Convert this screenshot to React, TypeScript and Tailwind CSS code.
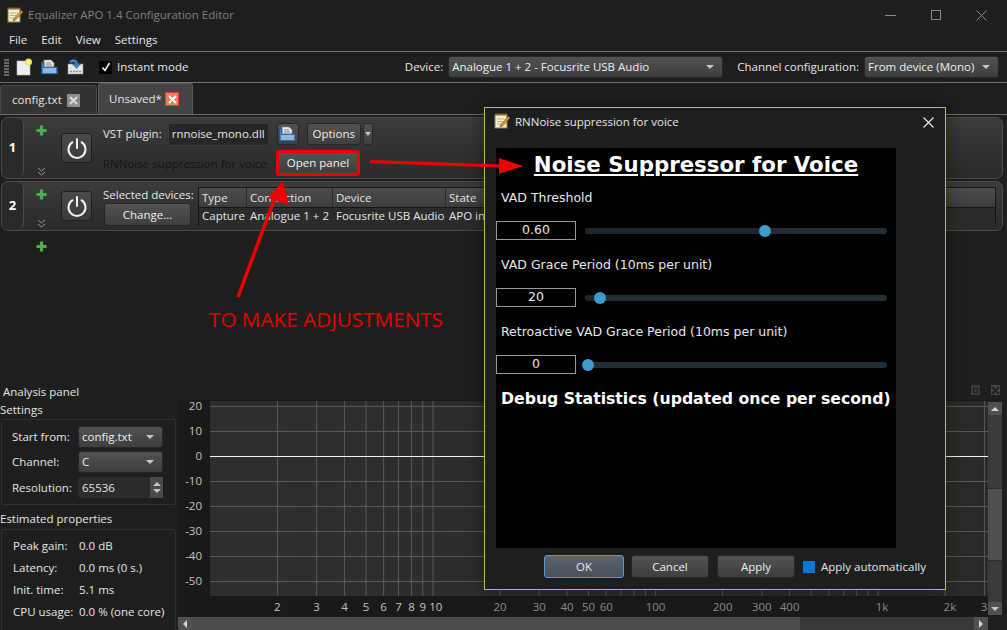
import type { ReactNode } from "react";

const uiFont = "font-['Open_Sans',sans-serif]";
const btn =
  "flex items-center justify-center rounded-[3px] border border-[#262626] bg-linear-to-b from-[#525252] to-[#3e3e3e] text-[#f0f0f0]";

function NotepadIcon() {
  return (
    <svg width="16" height="16" viewBox="0 0 16 16">
      <rect x="1" y="2" width="12" height="13" fill="#f5eecb" stroke="#8a7a50" strokeWidth="1" />
      <path d="M1.5 1.5h11" stroke="#b58a3a" strokeWidth="2" strokeDasharray="1 1" />
      <path d="M3 6h8M3 8.5h6M3 11h5" stroke="#b9b08a" strokeWidth="1" />
      <path d="M14.5 3.5L7.5 11l-1.5 3 3-1.5 7-7.5z" fill="#e69a2e" stroke="#7a4a12" strokeWidth="0.7" />
    </svg>
  );
}

function NewIcon() {
  return (
    <svg width="16" height="18" viewBox="0 0 16 18">
      <rect x="1" y="3" width="13" height="14" fill="#efefef" stroke="#bdbdbd" strokeWidth="0.6" />
      <circle cx="12.5" cy="4" r="3.5" fill="#f6e04a" />
      <circle cx="12.5" cy="4" r="1.8" fill="#fff9b0" />
    </svg>
  );
}

function OpenIcon() {
  return (
    <svg width="17" height="16" viewBox="0 0 17 16">
      <path d="M3 1h7l3 3v5H3z" fill="#e9e9e9" stroke="#9a9a9a" strokeWidth="0.6" />
      <path d="M5 4h5M5 6h6" stroke="#8a8a8a" strokeWidth="1" />
      <path d="M0.5 3v12h16V8H3V3z" fill="#3f7fbf" stroke="#1d4f86" strokeWidth="0.7" />
      <rect x="2" y="9" width="13" height="5" fill="#8db9e4" />
    </svg>
  );
}

function SaveIcon() {
  return (
    <svg width="17" height="16" viewBox="0 0 17 16">
      <rect x="1" y="5" width="15" height="10" fill="#e6e6e6" stroke="#8f8f8f" strokeWidth="0.6" />
      <path d="M3 12.500h2M6 12.500h2M9 12.500h2M12 12.500h2" stroke="#8a8a8a" strokeWidth="1.500" />
      <path d="M3 3c3-2.500 6.500-1.500 6.500 2" fill="none" stroke="#3c86c6" strokeWidth="2.600" />
      <path d="M5.500 5h8l-4 4.500z" fill="#3c86c6" stroke="#1b4f80" strokeWidth="0.5" />
    </svg>
  );
}

function Caret({ className = "" }: { className?: string }) {
  return <span className={`h-0 w-0 border-x-[4px] border-t-[4px] border-x-transparent border-t-[#c8c8c8] ${className}`} />;
}

function Plus() {
  return (
    <svg width="11" height="11" viewBox="0 0 11 11">
      <path d="M5.500 0.500v10M0.500 5.500h10" stroke="#4cae4c" strokeWidth="3.2" />
    </svg>
  );
}

function Chevrons() {
  return (
    <svg width="9" height="9" viewBox="0 0 9 9" fill="none" stroke="#9a9a9a" strokeWidth="1">
      <path d="M1 1l3.500 3L8 1M1 5l3.500 3L8 5" />
    </svg>
  );
}

function CloseGlyph({ color }: { color: string }) {
  return (
    <svg width="9" height="9" viewBox="0 0 9 9" stroke={color} strokeWidth="2">
      <path d="M1 1l7 7M8 1l-7 7" />
    </svg>
  );
}

function PowerButton() {
  return (
    <div className="flex h-[30px] w-[31px] items-center justify-center rounded-[3px] border border-[#1e1e1e] bg-linear-to-b from-[#4a4a4a] to-[#3a3a3a]">
      <svg width="22" height="22" viewBox="0 0 22 22" fill="none" stroke="#f2f2f2" strokeWidth="2" strokeLinecap="round">
        <path d="M11 2v9" />
        <path d="M6.500 5.200a8.500 8.500 0 1 0 9 0" />
      </svg>
    </div>
  );
}

function Row({ num, height, children }: { num: number; height: string; children: ReactNode }) {
  return (
    <div className={`flex ${height} rounded-[7px] border border-[#4b4b4b] bg-linear-to-b from-[#3b3b3b] to-[#2a2a2a]`}>
      <div className="flex w-[22px] items-center justify-center rounded-[7px] border-r border-[#4b4b4b] bg-[#2a2a2a] text-[13px] font-bold text-white">
        {num}
      </div>
      <div className="flex w-[37px] flex-col items-center justify-between pt-[7px] pr-[3px] pb-[2px]">
        <Plus />
        <Chevrons />
      </div>
      <div className="flex w-[42px] items-center">
        <PowerButton />
      </div>
      <div className="min-w-0 flex-1">{children}</div>
    </div>
  );
}

function Combo({ text, className }: { text: string; className: string }) {
  return (
    <div className={`${btn} justify-between! pr-[8px] pl-[3px] ${className}`}>
      <span>{text}</span>
      <Caret />
    </div>
  );
}

function Stat({ label, value }: { label: string; value: string }) {
  return (
    <div className="flex h-[22px] items-center">
      <span className="w-[66px]">{label}</span>
      <span>{value}</span>
    </div>
  );
}

function ParamRow({ label, value, thumb, track, top }: { label: string; value: string; thumb: string; track: string; top: string }) {
  return (
    <>
      <div className={`${top} h-[16px] pl-[5px] leading-[16px]`}>{label}</div>
      <div className="mt-[15px] flex h-[19px] items-center">
        <div className="flex h-[19px] w-[80px] items-center justify-center border border-[#9a9a9a]">{value}</div>
        <div className="relative ml-[9px] h-[6px] w-[302px] rounded-full bg-[#232f36]">
          <div className={`absolute top-[-3px] h-[12px] w-[12px] rounded-full bg-[#3d9ccb] ${thumb}`} />
          <div className={`h-[6px] rounded-l-full bg-[#1b262b] ${track}`} />
        </div>
      </div>
    </>
  );
}

const FREQS = [2, 3, 4, 5, 6, 7, 8, 9, 10, 20, 30, 40, 50, 60, 70, 80, 90, 100, 200, 300, 400, 500, 600, 700, 800, 900, 1000, 2000, 3000];
const fx = (f: number) => 433 + 222.6 * Math.log10(f / 10);
const DB = [20, 10, 0, -10, -20, -30, -40, -50];
const XLABELS: [string, number, string][] = [
  ["2", 2, "#c4c4c4"], ["3", 3, "#c4c4c4"], ["4", 4, "#c4c4c4"], ["5", 5, "#c4c4c4"], ["6", 6, "#c4c4c4"],
  ["7", 7, "#c4c4c4"], ["8", 8, "#c4c4c4"], ["9", 9, "#c4c4c4"], ["10", 10.3, "#c4c4c4"],
  ["20", 20, "#8a8f96"], ["30", 30, "#8a8f96"], ["40", 40, "#8a8f96"], ["50", 50, "#8a8f96"], ["60", 60, "#8a8f96"],
  ["100", 100, "#8a8f96"], ["200", 200, "#8a8f96"], ["300", 300, "#8a8f96"], ["400", 400, "#8a8f96"],
  ["1k", 1040, "#8a8f96"], ["2k", 2100, "#8a8f96"], ["3", 2990, "#8a8f96"],
];

function Chart() {
  return (
    <svg width="810" height="217" viewBox="178 400 810 217" className="block shrink-0 overflow-visible">
      <defs>
        <linearGradient id="plot" x1="0" y1="0" x2="1" y2="0">
          <stop offset="0" stopColor="#2e2e2e" />
          <stop offset="1" stopColor="#2a2a2a" />
        </linearGradient>
      </defs>
      <rect x="178" y="400" width="810" height="217" fill="#191919" />
      <rect x="210" y="401" width="778" height="195" fill="url(#plot)" />
      {FREQS.map((f) => (
        <line key={f} x1={fx(f)} x2={fx(f)} y1="401" y2="596" stroke="#595959" />
      ))}
      {DB.map((d) => {
        const y = 456.500 - d * 2.5;
        return (
          <g key={d}>
            <line x1="210" x2="988" y1={y} y2={y} stroke={d === 0 ? "#f4f4f4" : "#595959"} />
            <text x="202" y={y + 3} textAnchor="end" fontSize="11.500" fill="#c4c4c4" fontFamily="Open Sans, sans-serif">
              {d}
            </text>
          </g>
        );
      })}
      {XLABELS.map(([t, f, c]) => (
        <text key={t + f} x={fx(f)} y="611" textAnchor="middle" fontSize="11.500" fill={c} fontFamily="Open Sans, sans-serif">
          {t}
        </text>
      ))}
    </svg>
  );
}

function Dialog() {
  return (
    <div className="absolute top-[107px] left-[484px] flex h-[483px] w-[462px] flex-col border border-[#b6bd5e] bg-[#1e1e1e] shadow-[0_0_18px_rgba(0,0,0,0.45)]">
      <div className="flex h-[40px] shrink-0 items-start pt-[5px] pl-[9px]">
        <NotepadIcon />
        <span className="ml-[5px] leading-[17px]">RNNoise suppression for voice</span>
        <svg width="11" height="11" viewBox="0 0 11 11" className="mt-[4px] mr-[11px] ml-auto" stroke="#f0f0f0" strokeWidth="1.1">
          <path d="M0.500 0.500l10 10M10.500 0.500l-10 10" />
        </svg>
      </div>
      <div className="ml-[11px] h-[400px] w-[400px] shrink-0 bg-black font-['DejaVu_Sans',sans-serif] text-[12.500px] text-[#e8e8e8]">
        <div className="pt-[2px] text-center text-[21.300px] leading-[30px] font-bold text-white underline">Noise Suppressor for Voice</div>
        <ParamRow top="mt-[10px]" label="VAD Threshold" value="0.60" thumb="left-[174px]" track="w-[180px]" />
        <ParamRow top="mt-[17px]" label="VAD Grace Period (10ms per unit)" value="20" thumb="left-[9px]" track="w-[15px]" />
        <ParamRow top="mt-[17px]" label="Retroactive VAD Grace Period (10ms per unit)" value="0" thumb="left-[-3px]" track="w-0" />
        <div className="mt-[15px] pl-[5px] text-[15.700px] leading-[20px] font-bold text-white">Debug Statistics (updated once per second)</div>
      </div>
      <div className="mt-[7px] flex h-[23px] items-center">
        <div className="ml-[59px] flex h-[23px] w-[80px] items-center justify-center rounded-[3px] border border-[#4a9ddb] bg-linear-to-b from-[#5c6470] to-[#4a4f57]">OK</div>
        <div className={`${btn} ml-[7px] h-[23px] w-[78px]`}>Cancel</div>
        <div className={`${btn} ml-[8px] h-[23px] w-[78px]`}>Apply</div>
        <span className="ml-[8px] h-[12px] w-[12px] bg-[#0a78d2]" />
        <span className="ml-[6px]">Apply automatically</span>
      </div>
    </div>
  );
}

function Annotations() {
  return (
    <>
      <svg className="absolute top-0 left-0" width="1007" height="630" viewBox="0 0 1007 630" fill="#f00000" stroke="none">
        <path d="M370 161.500L500 166" stroke="#f00000" strokeWidth="3" />
        <path d="M499 158l24 8-24 8z" />
        <path d="M238 297L277 192" stroke="#f00000" strokeWidth="3.500" />
        <path d="M283 181l6 24-21-7z" />
      </svg>
      <div className="absolute top-[306px] left-[209px] text-[20.700px] leading-[26px] text-[#e60000]">TO MAKE ADJUSTMENTS</div>
    </>
  );
}

export default function App() {
  return (
    <div className={`relative flex h-[630px] w-[1007px] flex-col overflow-hidden bg-[#1e1e1e] text-[11.500px] whitespace-nowrap text-[#e6e6e6] ${uiFont}`}>
      {/* title bar */}
      <div className="flex h-[30px] shrink-0 items-center pl-[7px]">
        <NotepadIcon />
        <span className="ml-[5px] text-[#808080]">Equalizer APO 1.4 Configuration Editor</span>
        <div className="mr-[20px] ml-auto flex items-center gap-[35px]">
          <span className="h-px w-[11px] bg-[#8c8c8c]" />
          <span className="h-[10px] w-[10px] border border-[#8c8c8c]" />
          <svg width="11" height="11" viewBox="0 0 11 11" stroke="#8c8c8c" strokeWidth="1">
            <path d="M0.500 0.500l10 10M10.500 0.500l-10 10" />
          </svg>
        </div>
      </div>

      {/* menu */}
      <div className="flex h-[22px] shrink-0 items-center gap-[14px] border-b border-[#6f6f6f] pb-[2px] pl-[9px]">
        <span>File</span>
        <span>Edit</span>
        <span>View</span>
        <span>Settings</span>
      </div>

      {/* toolbar */}
      <div className="flex h-[31px] shrink-0 items-center border-b border-[#6f6f6f] pr-[8px] pl-[4px]">
        <span className="h-[17px] w-[5px] bg-[repeating-linear-gradient(to_bottom,#6a6a6a_0,#6a6a6a_2px,transparent_2px,transparent_3px)]" />
        <div className="ml-[7px] flex w-[78px] items-center gap-[9px]">
          <NewIcon />
          <OpenIcon />
          <SaveIcon />
        </div>
        <span className="ml-[5px] flex h-[13px] w-[13px] items-center justify-center bg-black">
          <svg width="10" height="10" viewBox="0 0 10 10" fill="none" stroke="#fff" strokeWidth="1.500">
            <path d="M1.500 5.500l2.500 3L8.500 1" />
          </svg>
        </span>
        <span className="ml-[5px]">Instant mode</span>
        <span className="ml-auto">Device:</span>
        <Combo text="Analogue 1 + 2 - Focusrite USB Audio" className="ml-[5px] h-[22px] w-[275px]" />
        <span className="ml-[14px]">Channel configuration:</span>
        <Combo text="From device (Mono)" className="ml-[5px] h-[22px] w-[135px]" />
      </div>

      {/* tabs */}
      <div className="flex h-[32px] shrink-0 items-end border-b border-[#6f6f6f]">
        <div className="flex h-[29px] w-[97px] items-center rounded-t-[3px] border border-b-0 border-[#474747] bg-[#333333] pl-[11px]">
          <span>config.txt</span>
          <span className="mr-[16px] ml-auto flex h-[13px] w-[13px] items-center justify-center bg-[#8d8d8d]">
            <CloseGlyph color="#dcdcdc" />
          </span>
        </div>
        <div className="ml-px flex h-[31px] w-[95px] items-center rounded-t-[3px] border border-b-0 border-[#585858] bg-[#444444] pl-[10px]">
          <span>Unsaved*</span>
          <span className="mr-[13px] ml-auto flex h-[14px] w-[14px] items-center justify-center border border-[#e23b2e] bg-[#ea7d62]">
            <CloseGlyph color="#ffffff" />
          </span>
        </div>
      </div>

      {/* filter rows */}
      <div className="flex min-h-0 flex-1 flex-col gap-[2px] pt-[2px] pr-[4px] pl-px">
        <Row num={1} height="h-[62px]">
          <div className="flex h-[28px] items-center pt-[4px]">
            <span>VST plugin:</span>
            <div className="ml-[6px] flex h-[23px] w-[101px] items-center justify-center rounded-[3px] border border-[#3a3a3a] bg-[#262626]">rnnoise_mono.dll</div>
            <div className={`${btn} ml-[8px] h-[22px] w-[22px]`}>
              <OpenIcon />
            </div>
            <div className={`${btn} ml-[8px] h-[22px] w-[54px]`}>Options</div>
            <div className={`${btn} ml-[2px] h-[22px] w-[10px]`}>
              <Caret className="border-x-[3px]!" />
            </div>
          </div>
          <div className="mt-[4px] flex items-center">
            <span className="w-[173px] pt-[1px] text-[#141414]">RNNoise suppression for voice</span>
            <div className={`${btn} h-[26px] w-[84px] border-[3px]! border-[#ee0000]!`}>Open panel</div>
          </div>
        </Row>
        <Row num={2} height="h-[50px]">
          <div className="flex h-full">
            <div className="w-[95px] pt-[4px]">
              <div className="leading-[17px]">Selected devices:</div>
              <div className={`${btn} ml-px h-[23px] w-[87px]`}>Change...</div>
            </div>
            <div className="mt-[5px] h-[39px] w-[798px] border border-[#151515]">
              <div className="grid h-[20px] grid-cols-[48px_86px_113px_1fr] border-b border-[#151515] bg-linear-to-b from-[#4c4c4c] to-[#3c3c3c] leading-[19px]">
                <span className="border-r border-[#2a2a2a] pl-[3px]">Type</span>
                <span className="border-r border-[#2a2a2a] pl-[3px]">Connection</span>
                <span className="border-r border-[#2a2a2a] pl-[3px]">Device</span>
                <span className="pl-[3px]">State</span>
              </div>
              <div className="grid h-[18px] grid-cols-[48px_86px_113px_1fr] bg-[#2b2b2b] leading-[16px]">
                <span className="pl-[3px]">Capture</span>
                <span className="pl-[3px]">Analogue 1 + 2</span>
                <span className="pl-[3px]">Focusrite USB Audio</span>
                <span className="pl-[3px]">APO installed</span>
              </div>
            </div>
          </div>
        </Row>
        <div className="mt-[8px] pl-[35px]">
          <Plus />
        </div>
      </div>

      {/* analysis panel */}
      <div className="flex h-[250px] shrink-0">
        <div className="w-[178px] shrink-0">
          <div className="h-[24px] pl-[3px] leading-[24px]">Analysis panel</div>
          <div className="h-[15px] leading-[11px]">Settings</div>
          <div className="ml-px h-[86px] w-[175px] rounded-[2px] border border-[#303030] pt-[6px] pl-[10px]">
            <div className="flex h-[22px] items-center">
              <span className="w-[66px]">Start from:</span>
              <Combo text="config.txt" className="h-[22px] w-[85px]" />
            </div>
            <div className="mt-[3px] flex h-[22px] items-center">
              <span className="w-[66px]">Channel:</span>
              <Combo text="C" className="h-[22px] w-[85px]" />
            </div>
            <div className="mt-[4px] flex h-[21px] items-center">
              <span className="w-[66px]">Resolution:</span>
              <div className="flex h-[21px] w-[85px] items-center justify-between rounded-[3px] bg-[#2b2b2b] pl-[4px]">
                <span>65536</span>
                <span className="flex h-[21px] w-[13px] flex-col items-center justify-center gap-[3px] bg-[#4a4a4a]">
                  <span className="h-0 w-0 border-x-[4px] border-b-[4px] border-x-transparent border-b-[#c8c8c8]" />
                  <Caret />
                </span>
              </div>
            </div>
          </div>
          <div className="mt-[6px] h-[17px] leading-[15px]">Estimated properties</div>
          <div className="mt-[1px] ml-px h-[110px] w-[175px] rounded-[2px] border border-[#303030] pt-[5px] pl-[11px]">
            <Stat label="Peak gain:" value="0.0 dB" />
            <Stat label="Latency:" value="0.0 ms (0 s.)" />
            <Stat label="Init. time:" value="5.1 ms" />
            <Stat label="CPU usage:" value="0.0 % (one core)" />
          </div>
        </div>
        <div className="min-w-0 flex-1">
          <div className="flex h-[20px] items-center justify-end gap-[11px] pr-[7px]">
            <span className="flex h-[10px] w-[9px] items-center justify-center bg-[#3a3a3a]">
              <span className="h-[5px] w-[5px] border border-[#1e1e1e]" />
            </span>
            <span className="flex h-[10px] w-[9px] items-center justify-center bg-[#4a4a4a]">
              <CloseGlyph color="#1e1e1e" />
            </span>
          </div>
          <div className="flex">
            <Chart />
            <div className="mt-[2px] flex h-[213px] w-[14px] flex-col bg-[#3a3a3a]">
              <div className="flex h-[13px] items-center justify-center bg-[#505050]">
                <span className="h-0 w-0 border-x-[4px] border-b-[4px] border-x-transparent border-b-[#d4d4d4]" />
              </div>
              <div className="mt-[73px] h-[73px] border-y border-[#2c2c2c] bg-[#505050]" />
              <div className="mt-auto flex h-[13px] items-center justify-center bg-[#505050]">
                <Caret />
              </div>
            </div>
          </div>
          <div className="flex h-[13px] w-[810px]">
            <div className="flex w-[14px] items-center justify-center bg-[#505050]">
              <span className="h-0 w-0 border-y-[4px] border-r-[4px] border-y-transparent border-r-[#d4d4d4]" />
            </div>
            <div className="w-[608px] bg-[#4d4d4d]" />
            <div className="flex-1 bg-[#383838]" />
            <div className="flex w-[14px] items-center justify-center bg-[#505050]">
              <span className="h-0 w-0 border-y-[4px] border-l-[4px] border-y-transparent border-l-[#d4d4d4]" />
            </div>
          </div>
        </div>
      </div>

      <Dialog />
      <Annotations />
    </div>
  );
}
